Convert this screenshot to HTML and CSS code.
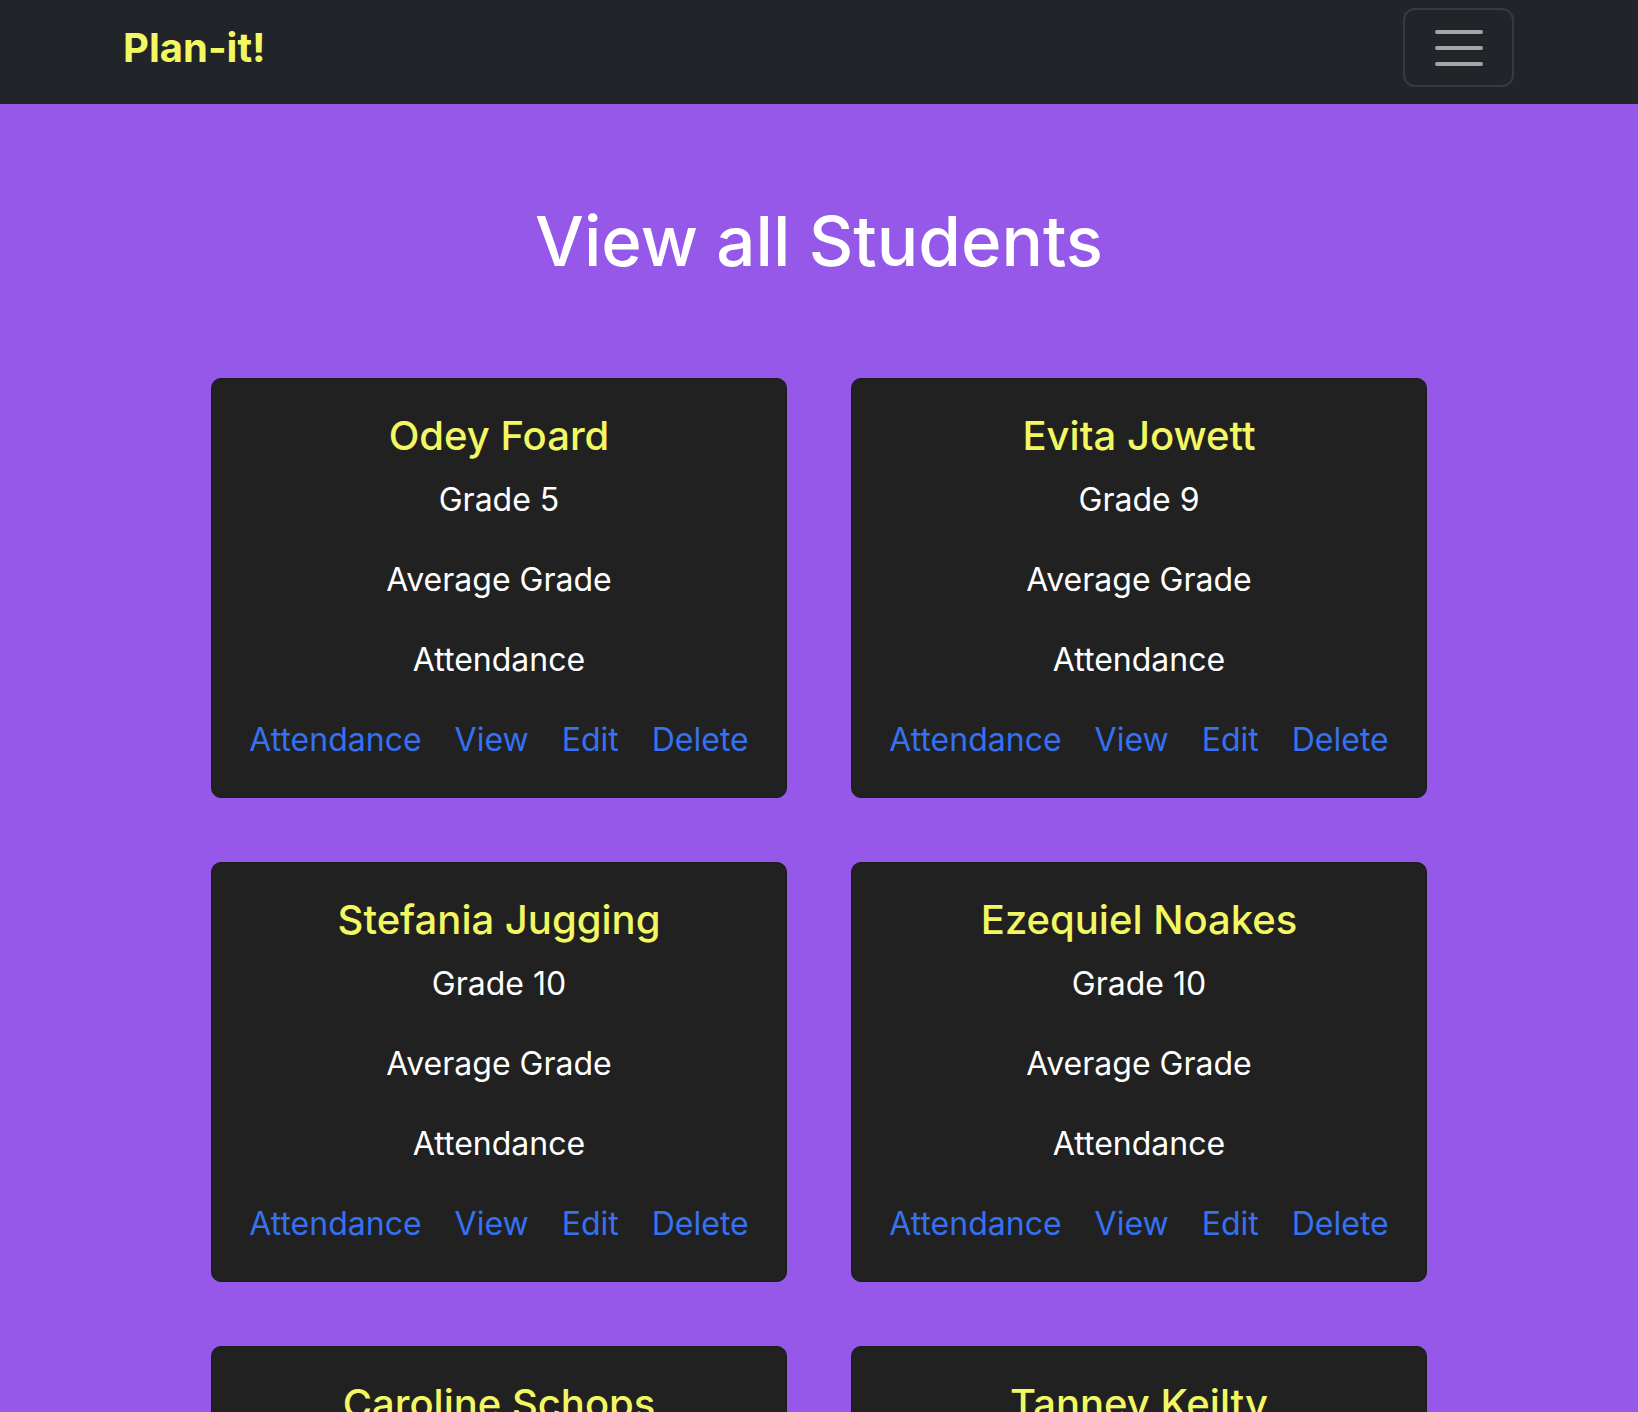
FILE: index.html
```html
<!DOCTYPE html>
<html lang="en">
<head>
<meta charset="utf-8">
<title>Plan-it! - View all Students</title>
<link rel="stylesheet" href="styles.css">
</head>
<body>
<nav class="navbar">
  <a class="brand" href="#">Plan-it!</a>
  <button class="toggler" type="button" aria-label="Toggle navigation">
    <svg width="48" height="36" viewBox="0 0 48 36" aria-hidden="true">
      <path d="M2 2H46M2 18H46M2 34H46" stroke="#a3a4a6" stroke-width="4" stroke-linecap="round"/>
    </svg>
  </button>
</nav>
<main class="page">
  <h1 class="title">View all Students</h1>
  <div class="grid">
    <div class="card">
      <h5 class="card-title">Odey Foard</h5>
      <p class="line">Grade 5</p>
      <p class="line">Average Grade</p>
      <p class="line">Attendance</p>
      <div class="links"><a href="#">Attendance</a><a href="#">View</a><a href="#">Edit</a><a href="#">Delete</a></div>
    </div>
    <div class="card">
      <h5 class="card-title">Evita Jowett</h5>
      <p class="line">Grade 9</p>
      <p class="line">Average Grade</p>
      <p class="line">Attendance</p>
      <div class="links"><a href="#">Attendance</a><a href="#">View</a><a href="#">Edit</a><a href="#">Delete</a></div>
    </div>
    <div class="card">
      <h5 class="card-title">Stefania Jugging</h5>
      <p class="line">Grade 10</p>
      <p class="line">Average Grade</p>
      <p class="line">Attendance</p>
      <div class="links"><a href="#">Attendance</a><a href="#">View</a><a href="#">Edit</a><a href="#">Delete</a></div>
    </div>
    <div class="card">
      <h5 class="card-title">Ezequiel Noakes</h5>
      <p class="line">Grade 10</p>
      <p class="line">Average Grade</p>
      <p class="line">Attendance</p>
      <div class="links"><a href="#">Attendance</a><a href="#">View</a><a href="#">Edit</a><a href="#">Delete</a></div>
    </div>
    <div class="card">
      <h5 class="card-title">Caroline Schops</h5>
      <p class="line">Grade 7</p>
      <p class="line">Average Grade</p>
      <p class="line">Attendance</p>
      <div class="links"><a href="#">Attendance</a><a href="#">View</a><a href="#">Edit</a><a href="#">Delete</a></div>
    </div>
    <div class="card">
      <h5 class="card-title">Tanney Keilty</h5>
      <p class="line">Grade 8</p>
      <p class="line">Average Grade</p>
      <p class="line">Attendance</p>
      <div class="links"><a href="#">Attendance</a><a href="#">View</a><a href="#">Edit</a><a href="#">Delete</a></div>
    </div>
  </div>
</main>
</body>
</html>
```
FILE: styles.css
```css
* { box-sizing: border-box; }
html, body {
  margin: 0;
  padding: 0;
}
body {
  background: #9558e8;
  font-family: Inter, "Noto Sans", sans-serif;
  font-size: 32px;
  line-height: 1.5;
  color: #fff;
}
.navbar {
  height: 104px;
  background: #212529;
  display: flex;
  justify-content: space-between;
  align-items: flex-start;
  padding: 8px 124px 0 123px;
}
.brand {
  color: #f3f862;
  font-size: 40px;
  font-weight: 650;
  line-height: 48px;
  text-decoration: none;
  margin-top: 16px;
}
.toggler {
  width: 111px;
  height: 79px;
  background: transparent;
  border: 2px solid rgba(255, 255, 255, 0.1);
  border-radius: 12px;
  display: flex;
  align-items: center;
  justify-content: center;
  padding: 0;
}
.toggler svg { display: block; }
.page {
  padding-top: 95px;
}
.title {
  margin: 0;
  text-align: center;
  font-size: 69px;
  font-weight: 500;
  line-height: 84px;
}
.grid {
  width: 1216px;
  margin: 95px auto 0;
  display: grid;
  grid-template-columns: 1fr 1fr;
  column-gap: 64px;
  row-gap: 64px;
}
.card {
  background: #212121;
  border: 1px solid #1c1c1c;
  border-radius: 10px;
  padding: 33px 32px 33px;
  text-align: center;
}
.card-title {
  margin: 0 0 16px;
  color: #f3f862;
  font-size: 40px;
  font-weight: 500;
  line-height: 48px;
}
.line {
  margin: 0 0 32px;
  line-height: 48px;
}
.links {
  display: flex;
  justify-content: center;
  gap: 33px;
  line-height: 48px;
}
.links a {
  color: #3571f0;
  text-decoration: none;
}
```
